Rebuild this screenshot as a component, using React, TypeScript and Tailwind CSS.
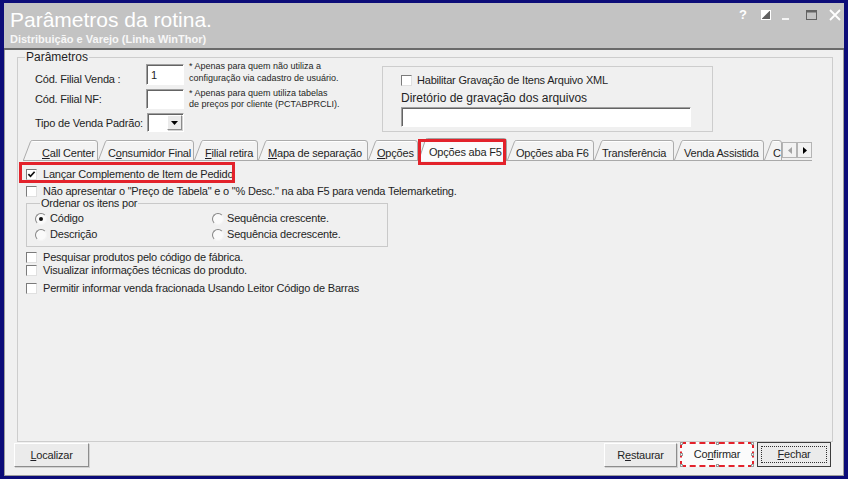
import React from 'react';

type TabDef = { pre?: string; k?: string; post: string; w: number; cls: string; pl: string };

const tabsLeft: TabDef[] = [
  { k: 'C', post: 'all Center', w: 75, cls: 'w-[75px]', pl: 'pl-[19px]' },
  { pre: 'C', k: 'o', post: 'nsumidor Final', w: 96, cls: 'w-[96px]', pl: 'pl-[10px]' },
  { k: 'F', post: 'ilial retira', w: 64, cls: 'w-[64px]', pl: 'pl-[11px]' },
  { k: 'M', post: 'apa de separação', w: 110, cls: 'w-[110px]', pl: 'pl-[10px]' },
  { k: 'O', post: 'pções', w: 50, cls: 'w-[50px]', pl: 'pl-[9px]' },
];

const tabsRight: TabDef[] = [
  { post: 'Opções aba F6', w: 87, cls: 'w-[87px]', pl: 'pl-[9px]' },
  { post: 'Transferência', w: 80, cls: 'w-[80px]', pl: 'pl-[8px]' },
  { post: 'Venda Assistida', w: 90, cls: 'w-[90px]', pl: 'pl-[10px]' },
  { post: 'C', w: 18, cls: 'w-[18px]', pl: 'pl-[9px]' },
];

const sunken =
  'border border-t-[#a0a0a0] border-l-[#a0a0a0] border-r-white border-b-white shadow-[inset_1px_1px_0_#646464] bg-white';

const raised =
  'border border-t-white border-l-white border-r-[#8d8d8d] border-b-[#8d8d8d] shadow-[1px_1px_0_#d2d2d2] bg-[#ebebeb]';

const Mn = ({ pre = '', k, post }: { pre?: string; k?: string; post: string }) => (
  <>
    {pre}
    {k && <u>{k}</u>}
    {post}
  </>
);

const Check = ({ checked }: { checked?: boolean }) => (
  <span className="relative block h-[11px] w-[11px] shrink-0 border border-t-[#7b7b7b] border-l-[#7b7b7b] border-r-[#e0e0e0] border-b-[#e0e0e0] bg-white">
    {checked && (
      <svg width="9" height="9" viewBox="0 0 9 9" className="absolute left-0 top-0">
        <path d="M1.4 4.1 L3.5 6.3 L7.6 1.7" fill="none" stroke="#111" strokeWidth="1.7" />
      </svg>
    )}
  </span>
);

const Radio = ({ on }: { on?: boolean }) => (
  <span className="flex h-[12px] w-[12px] shrink-0 items-center justify-center rounded-full border border-t-[#858585] border-l-[#858585] border-r-[#f4f4f4] border-b-[#f4f4f4] bg-[#fafafa]">
    {on && <span className="block h-[4px] w-[4px] rounded-full bg-[#111]" />}
  </span>
);

const CheckRow = ({ children, checked, cls = '' }: { children: React.ReactNode; checked?: boolean; cls?: string }) => (
  <div className={`relative flex h-[13px] items-center gap-[6px] ${cls}`}>
    <Check checked={checked} />
    <span className="whitespace-nowrap leading-[13px]">{children}</span>
  </div>
);

const RadioItem = ({ children, on }: { children: React.ReactNode; on?: boolean }) => (
  <div className="flex h-[13px] items-center gap-[3px]">
    <Radio on={on} />
    <span className="whitespace-nowrap leading-[13px]">{children}</span>
  </div>
);

// slanted tab outline, open at the bottom
const tabPath = (w: number, h: number) =>
  `M0.5 ${h} L7.5 1.6 Q8 0.5 9.2 0.5 H${w - 3} Q${w - 0.5} 0.5 ${w - 0.5} 3 V${h}`;

const Tab = ({ t }: { t: TabDef }) => (
  <div className={`relative h-[20px] shrink-0 overflow-hidden whitespace-nowrap pt-[7px] leading-[13px] ${t.cls} ${t.pl}`}>
    <svg className="absolute left-0 top-0" width={t.w} height={20}>
      <path d={tabPath(t.w, 20)} fill="#f3f3f3" stroke="#acacac" />
      <path d={`M9.5 1.5 H${t.w - 3}`} stroke="#ffffff" />
    </svg>
    <span className="relative">
      <Mn pre={t.pre} k={t.k} post={t.post} />
    </span>
  </div>
);

const Handle = ({ cls }: { cls: string }) => (
  <span className={`absolute h-[3px] w-[3px] border border-[#9a9a9a] bg-white ${cls}`} />
);

const TitleBar = () => (
  <div className="flex h-[45px] shrink-0 justify-between bg-[#c3c3c3] pl-[6px] pr-[3px] text-white">
    <div className="pt-[5px] tracking-normal">
      <div className="text-[21px] leading-[24px]">Parâmetros da rotina.</div>
      <div className="mt-[1px] text-[11px] font-bold leading-[13px] text-[#f7f7f7]">
        Distribuição e Varejo (Linha WinThor)
      </div>
    </div>
    <div className="flex h-[24px] items-center">
      <span className="w-[7px] text-[13px] font-bold leading-[14px]">?</span>
      <svg className="ml-[15px]" width="10" height="10" viewBox="0 0 10 10">
        <rect x="0.5" y="0.5" width="9" height="9" fill="#5f5f5f" stroke="#ffffff" />
        <path d="M1 9 L9 1 V9 Z" fill="#5f5f5f" />
        <path d="M1 1 H8.5 L1 8.5 Z" fill="#ffffff" />
      </svg>
      <svg className="ml-[11px] mt-[8px]" width="7" height="2">
        <rect width="7" height="2" fill="#f4f4f4" />
      </svg>
      <svg className="ml-[17px]" width="11" height="10" viewBox="0 0 11 10">
        <rect x="0.5" y="0.5" width="10" height="9" fill="none" stroke="#626262" />
        <rect x="0" y="0" width="11" height="2.5" fill="#626262" />
      </svg>
      <svg className="ml-[12px]" width="12" height="12" viewBox="0 0 12 12">
        <path d="M1 1 L11 11 M11 1 L1 11" stroke="#ffffff" strokeWidth="1.8" />
      </svg>
    </div>
  </div>
);

export default function App() {
  return (
    <div className="flex h-[479px] w-[848px] flex-col overflow-hidden bg-[#0c0c78] px-[4px] pt-[3px] pb-[3px] font-['Liberation_Sans',Arial,sans-serif] text-[11px] tracking-[-0.2px] text-[#1f1f25]">
      <TitleBar />
      <div className="h-[2px] shrink-0 bg-[#6a6a6a]" />

      <div className="flex min-h-0 flex-1 flex-col border-x border-b border-[#9c9c9c] bg-[#f0f0f0]">
        <fieldset className="ml-[12px] mr-[10px] h-[392px] min-w-0 border border-[#cdcdcd]">
          <legend className="ml-[7px] px-[1px] text-[12px] leading-[14px] tracking-normal">Parâmetros</legend>

          {/* header fields */}
          <div className="flex pl-[17px]">
            <div className="w-[347px] shrink-0">
              <div className="flex h-[25px] items-start">
                <span className="w-[111px] pt-[9px] leading-[13px]">Cód. Filial Venda :</span>
                <div className={`h-[21px] w-[38px] pl-[4px] pt-[4px] leading-[13px] ${sunken}`}>1</div>
                <div className="-mt-[4px] ml-[5px] text-[9px] leading-[12px] tracking-normal">
                  <div>* Apenas para quem não utiliza a</div>
                  <div>configuração via cadastro de usuário.</div>
                </div>
              </div>
              <div className="flex h-[24px] items-start">
                <span className="w-[111px] pt-[4px] leading-[13px]">Cód. Filial NF:</span>
                <div className={`h-[20px] w-[38px] ${sunken}`} />
                <div className="-mt-[1px] ml-[5px] text-[9px] leading-[11px] tracking-normal">
                  <div>* Apenas para quem utiliza tabelas</div>
                  <div>de preços por cliente (PCTABPRCLI).</div>
                </div>
              </div>
              <div className="flex h-[19px] items-start">
                <span className="w-[112px] pt-[4px] leading-[13px]">Tipo de Venda Padrão:</span>
                <div className={`flex h-[19px] w-[37px] justify-end p-[1px] ${sunken}`}>
                  <span className={`flex h-[15px] w-[15px] items-center justify-center ${raised}`}>
                    <svg width="7" height="4" viewBox="0 0 7 4">
                      <path d="M0 0 H7 L3.5 4 Z" fill="#000" />
                    </svg>
                  </span>
                </div>
              </div>
            </div>

            <div className="mt-[2px] h-[66px] w-[331px] shrink-0 border border-[#cdcdcd] pl-[18px] pt-[7px]">
              <div className="flex h-[13px] items-center gap-[5px]">
                <Check />
                <span className="leading-[13px]">Habilitar Gravação de Itens Arquivo XML</span>
              </div>
              <div className="mt-[3px] text-[12px] leading-[16px] tracking-normal">Diretório de gravação dos arquivos</div>
              <div className={`mt-[1px] h-[20px] w-[290px] ${sunken}`} />
            </div>
          </div>

          {/* page tabs */}
          <div className="ml-[5px] mt-[6px] flex h-[23px] w-[789px] items-end border-b border-[#a9a9a9]">
            {tabsLeft.map((t) => (
              <Tab key={t.post} t={t} />
            ))}
            <div className="relative z-10 -mb-px h-[23px] w-[89px] shrink-0 whitespace-nowrap pl-[11px] pt-[8px] leading-[13px]">
              <svg className="absolute left-0 top-0" width="89" height="23">
                <path d={tabPath(89, 23)} fill="#fbfbfb" stroke="#a3a3a3" />
              </svg>
              <span className="relative">Opções aba F5</span>
              <span className="absolute left-0 top-[1px] h-[26px] w-[88px] border-[3px] border-[#e3222b]" />
            </div>
            {tabsRight.map((t) => (
              <Tab key={t.post} t={t} />
            ))}
            <div className="mb-[2px] flex">
              <span className="flex h-[16px] w-[15px] items-center justify-center border border-[#b4b4b4] bg-[#f2f2f2]">
                <svg width="4" height="7" viewBox="0 0 4 7">
                  <path d="M4 0 V7 L0 3.5 Z" fill="#a3a3a3" />
                </svg>
              </span>
              <span className="flex h-[16px] w-[15px] items-center justify-center border border-[#b4b4b4] bg-[#f2f2f2]">
                <svg width="4" height="7" viewBox="0 0 4 7">
                  <path d="M0 0 V7 L4 3.5 Z" fill="#000" />
                </svg>
              </span>
            </div>
          </div>

          {/* page content */}
          <div className="pl-[8px]">
            <CheckRow checked cls="mt-[7px]">
              Lançar Complemento de Item de Pedido
              <span className="absolute -left-[7px] -top-[6px] h-[21px] w-[216px] border-[3px] border-[#e3222b]" />
            </CheckRow>
            <CheckRow cls="mt-[4px]">
              Não apresentar o "Preço de Tabela" e o "% Desc." na aba F5 para venda Telemarketing.
            </CheckRow>

            <fieldset className="mt-[-1px] w-[362px] border border-[#c9c9c9] pb-[5px] pl-[8px]">
              <legend className="ml-[5px] px-[1px] leading-[12px]">Ordenar os itens por</legend>
              <div className="mt-[3px] grid grid-cols-[177px_1fr] gap-y-[3px]">
                <RadioItem on>Código</RadioItem>
                <RadioItem>Sequência crescente.</RadioItem>
                <RadioItem>Descrição</RadioItem>
                <RadioItem>Sequência decrescente.</RadioItem>
              </div>
            </fieldset>

            <CheckRow cls="mt-[4px]">Pesquisar produtos pelo código de fábrica.</CheckRow>
            <CheckRow>Visualizar informações técnicas do produto.</CheckRow>
            <CheckRow cls="mt-[5px]">Permitir informar venda fracionada Usando Leitor Código de Barras</CheckRow>
          </div>
        </fieldset>

        {/* bottom buttons */}
        <div className="mt-[1px] flex h-[24px] items-start pl-[9px] pr-[12px]">
          <button className={`flex h-[24px] w-[75px] items-center justify-center ${raised}`}>
            <Mn k="L" post="ocalizar" />
          </button>
          <div className="flex-1" />
          <button className={`flex h-[24px] w-[73px] items-center justify-center ${raised}`}>
            <Mn pre="R" k="e" post="staurar" />
          </button>
          <button className="relative ml-[3px] flex h-[25px] w-[74px] -translate-y-px items-center justify-center border-2 border-dashed border-[#e3222b] bg-[#fbfbfb]">
            <Mn pre="Co" k="n" post="firmar" />
            <Handle cls="-left-[2px] -top-[2px]" />
            <Handle cls="left-[34px] -top-[2px]" />
            <Handle cls="-right-[2px] -top-[2px]" />
            <Handle cls="-left-[2px] top-[9px]" />
            <Handle cls="-right-[2px] top-[9px]" />
            <Handle cls="-left-[2px] -bottom-[2px]" />
            <Handle cls="left-[34px] -bottom-[2px]" />
            <Handle cls="-right-[2px] -bottom-[2px]" />
          </button>
          <button className="ml-[3px] flex h-[25px] w-[74px] -translate-y-px items-center justify-center border border-[#3d3d3d] bg-[#ebebeb] p-[3px]">
            <span className="flex h-full w-full items-center justify-center border border-dotted border-[#303030]">
              <Mn k="F" post="echar" />
            </span>
          </button>
        </div>
      </div>
    </div>
  );
}
